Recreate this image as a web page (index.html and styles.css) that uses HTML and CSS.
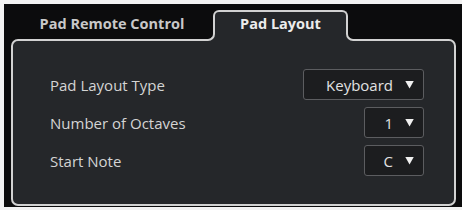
FILE: index.html
```html
<!DOCTYPE html>
<html>
<head>
<meta charset="utf-8">
<link rel="stylesheet" href="styles.css">
</head>
<body>
<div class="frame">
  <div class="tabs">
    <div class="tab">Pad Remote Control</div>
    <div class="tab active">
      <span class="corner corner-left"></span>
      Pad Layout
      <span class="corner corner-right"></span>
    </div>
  </div>
  <div class="panel">
    <div class="row">
      <span class="label">Pad Layout Type</span>
      <div class="select wide"><span>Keyboard</span><i class="caret"></i></div>
    </div>
    <div class="row">
      <span class="label">Number of Octaves</span>
      <div class="select"><span>1</span><i class="caret"></i></div>
    </div>
    <div class="row">
      <span class="label">Start Note</span>
      <div class="select"><span>C</span><i class="caret"></i></div>
    </div>
  </div>
</div>
</body>
</html>
```
FILE: styles.css
```css
* { box-sizing: border-box; }
html, body { margin: 0; padding: 0; }
body {
  background: #f3f3f3;
  width: 462px;
  height: 210px;
  overflow: hidden;
  font-family: "Open Sans", "Noto Sans", sans-serif;
}
.frame {
  margin: 4px 0 0 4px;
  height: 203px;
  background: #0c0c0d;
  padding: 6px 6px 0 7px;
}
.tabs {
  display: flex;
  height: 31px;
  margin-bottom: -2px;
  position: relative;
  z-index: 1;
}
.tab {
  height: 31px;
  width: 202px;
  padding-top: 5px;
  text-align: center;
  font-weight: 700;
  font-size: 14.5px;
  line-height: 18px;
  color: #c8c8c8;
}
.tab.active {
  position: relative;
  width: 135px;
  padding-top: 3px;
  border: 2px solid #d2d2d2;
  border-bottom: none;
  border-radius: 6px 6px 0 0;
  background: #25272a;
  color: #ececec;
}
.corner {
  position: absolute;
  bottom: 0;
  width: 8px;
  height: 8px;
  background: #25272a;
}
.corner::after {
  content: "";
  position: absolute;
  inset: 0;
  background: #0c0c0d;
  border-bottom: 2px solid #d2d2d2;
}
.corner-left { left: -10px; width: 10px; }
.corner-left::after {
  border-right: 2px solid #d2d2d2;
  border-bottom-right-radius: 7px;
}
.corner-right { right: -10px; width: 10px; }
.corner-right::after {
  border-left: 2px solid #d2d2d2;
  border-bottom-left-radius: 7px;
}
.panel {
  width: 445px;
  height: 167px;
  background: #25272a;
  border: 2px solid #d2d2d2;
  border-radius: 7px;
  padding: 28px 30px 0 37px;
  display: flex;
  flex-direction: column;
  gap: 7px;
}
.row {
  display: flex;
  align-items: center;
  justify-content: space-between;
  height: 31px;
}
.label {
  font-size: 15px;
  font-weight: 500;
  color: #d4d4d4;
}
.select {
  width: 60px;
  height: 31px;
  display: flex;
  align-items: center;
  justify-content: flex-end;
  gap: 12px;
  padding-right: 9px;
  background: #1c1d1f;
  border: 1px solid #5c5d60;
  border-radius: 3px;
  font-size: 15px;
  font-weight: 500;
  color: #e2e2e2;
}
.select.wide { width: 121px; }
.caret {
  display: block;
  width: 9px;
  height: 8px;
  background: #f0f0f0;
  clip-path: polygon(0 0, 100% 0, 50% 100%);
}
```
